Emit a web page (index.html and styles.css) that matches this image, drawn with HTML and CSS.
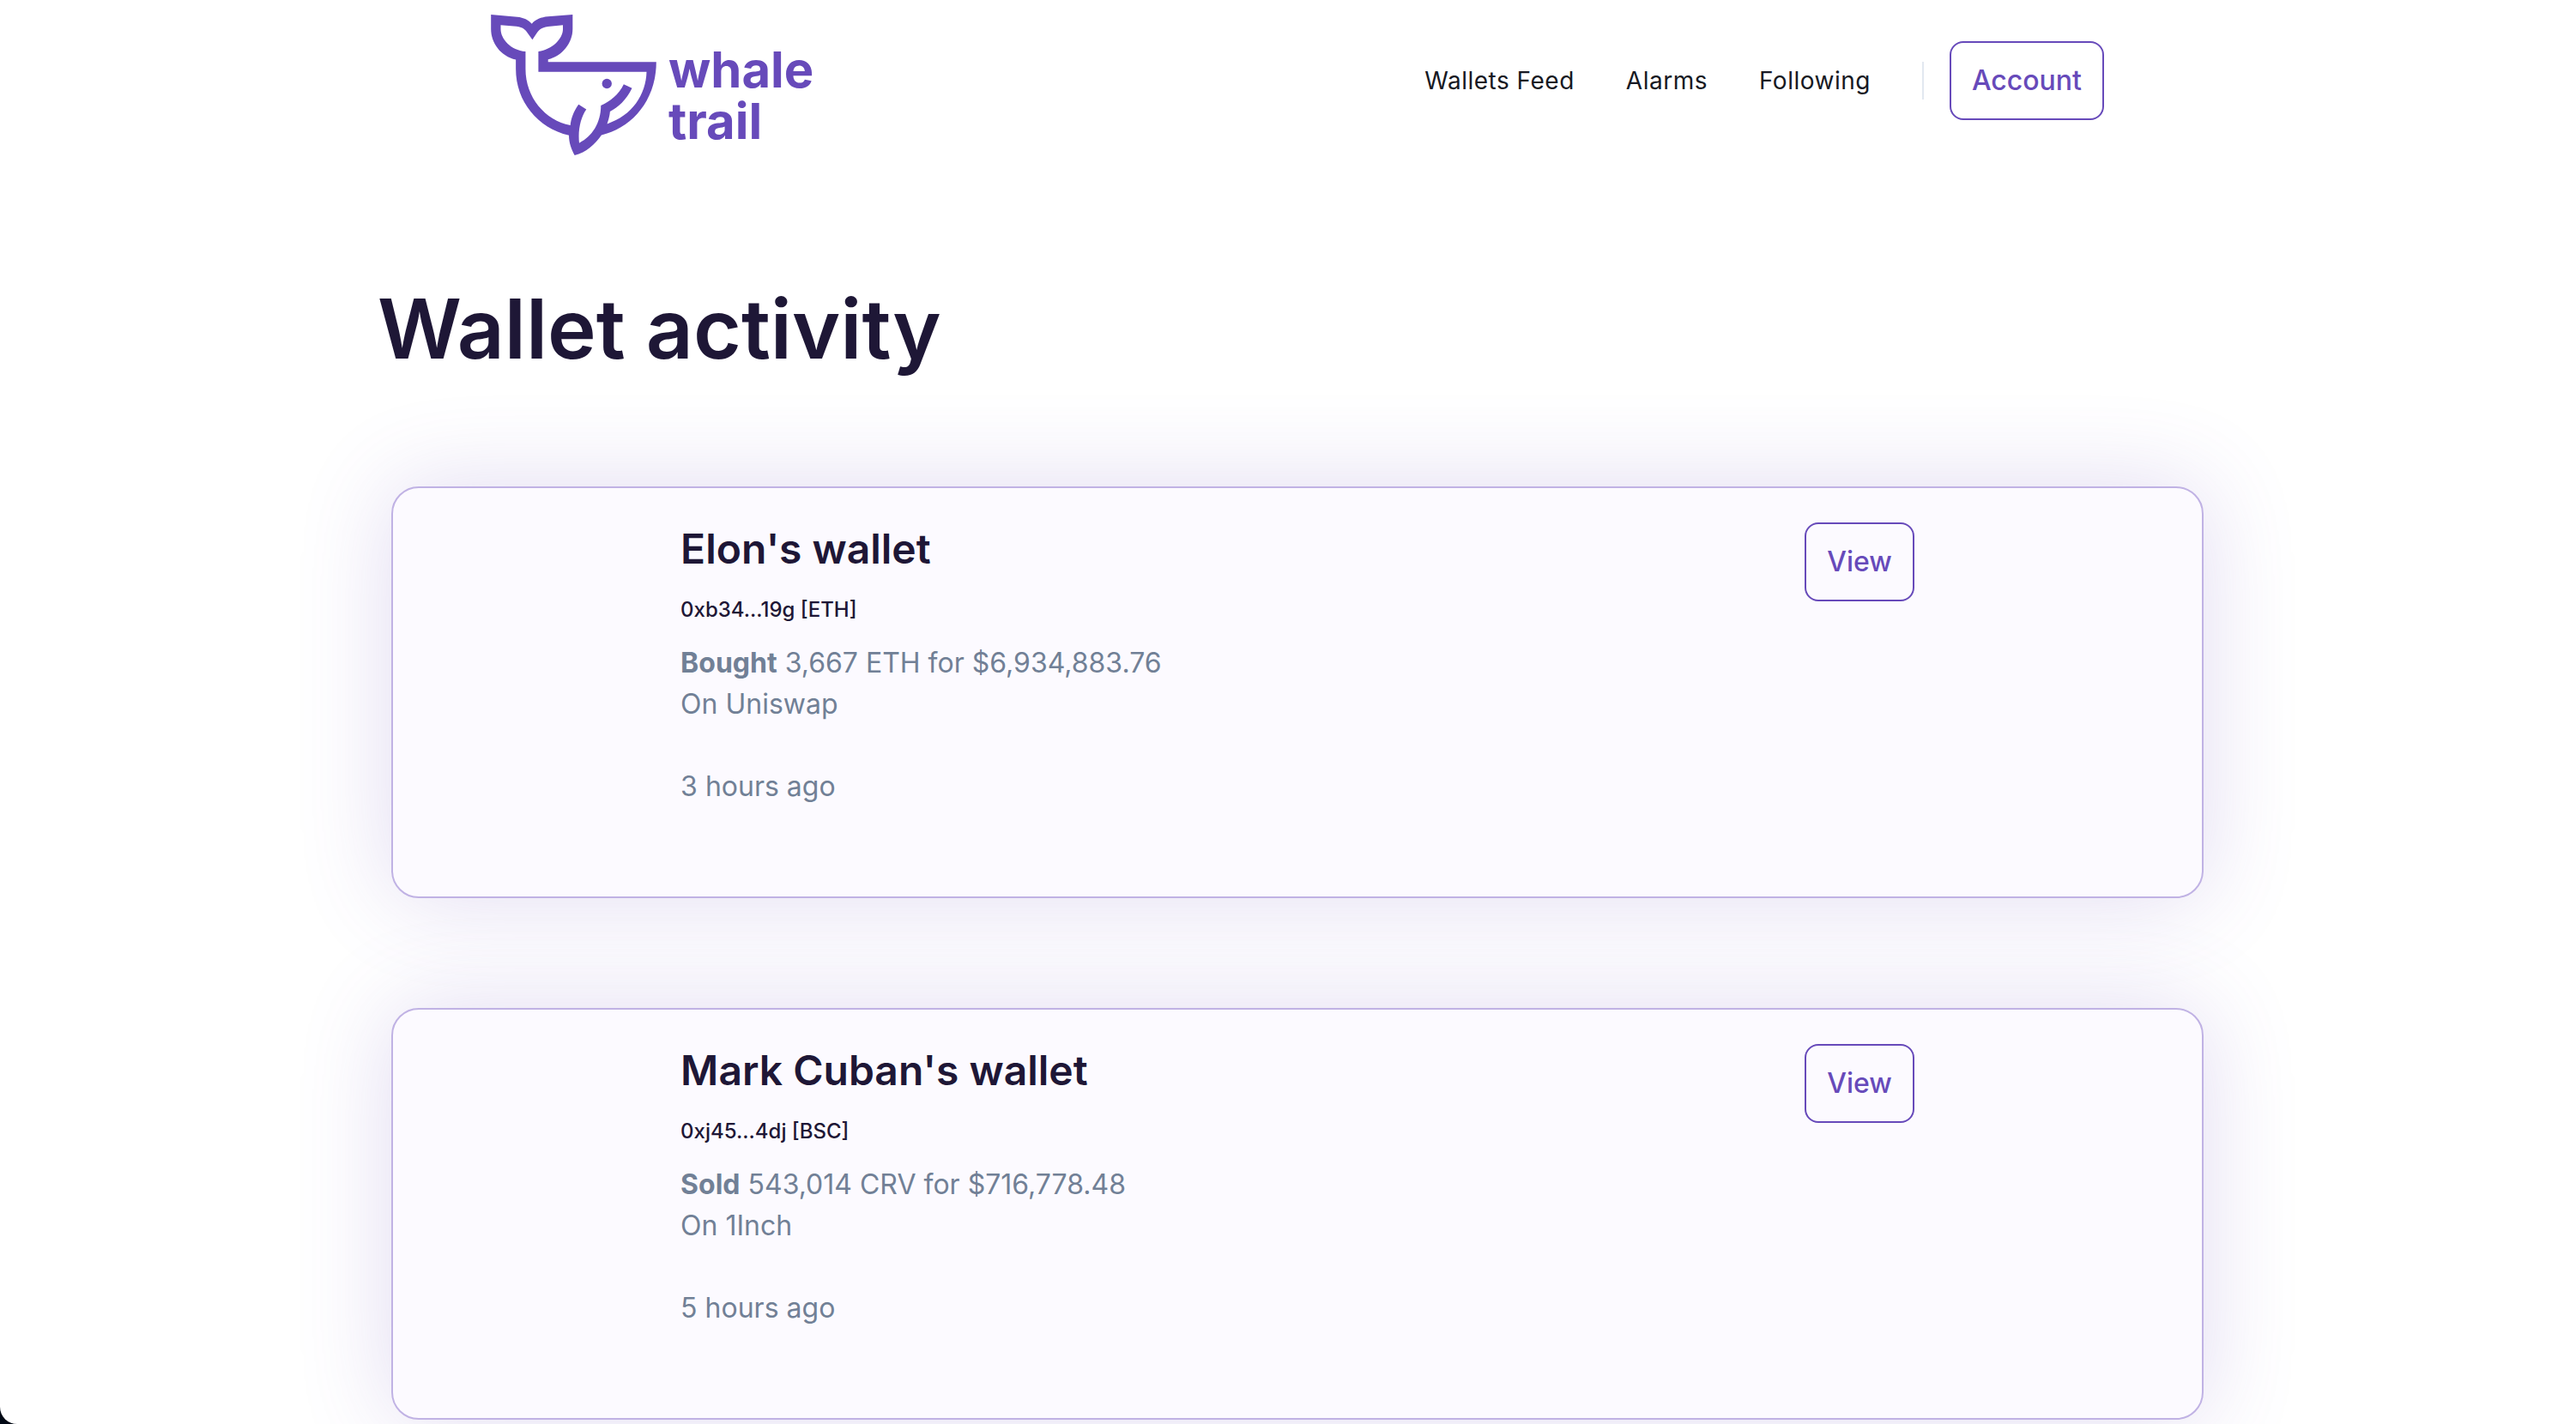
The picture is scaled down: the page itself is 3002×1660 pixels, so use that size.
FILE: index.html
```html
<!DOCTYPE html>
<html lang="en">
<head>
<meta charset="utf-8">
<title>Whale Trail</title>
<link rel="stylesheet" href="styles.css">
</head>
<body>
<div class="page">
  <header class="header">
    <a class="logo" href="#">
      <svg class="logo-mark" viewBox="36 50 579 493" aria-hidden="true">
        <path fill-rule="evenodd" d="M36 50L128 58C150 60 168 69 179 82C192 67 212 59 235 57L322 50V100C322 150 285 195 236 207V216H615C615 350 530 448 423 472C400 505 370 532 329 543C318 522 309 500 309 473C200 447 123 355 123 240V208C70 195 36 150 36 100ZM70 87L125 91C150 94 158 104 168 120L181 138L193 120C203 104 212 95 235 92L288 87V100C288 135 250 172 202 179V251H581C579 330 530 405 443 433C447 420 451 410 453 390C480 376 510 350 530 308L501 294C485 330 450 355 421 369C421 430 390 478 345 500C340 455 350 410 370 382L343 365C325 390 316 415 314 438C225 420 157 340 157 240V179C105 175 70 135 70 100Z"/>
        <circle cx="442" cy="292" r="17"/>
      </svg>
      <span class="logo-text">whale<br>trail</span>
    </a>
    <nav class="nav">
      <a class="nav-link" href="#">Wallets Feed</a>
      <a class="nav-link" href="#">Alarms</a>
      <a class="nav-link" href="#">Following</a>
      <div class="account"><button class="button" type="button">Account</button></div>
    </nav>
  </header>
  <main class="main">
    <h1 class="title">Wallet activity</h1>
    <div class="cards">
      <article class="card">
        <div class="card-body">
          <h2 class="wallet-name">Elon's wallet</h2>
          <p class="wallet-address">0xb34...19g [ETH]</p>
          <p class="trade"><strong>Bought</strong> 3,667 ETH for $6,934,883.76<br>On Uniswap</p>
          <p class="time">3 hours ago</p>
        </div>
        <button class="button" type="button">View</button>
      </article>
      <article class="card">
        <div class="card-body">
          <h2 class="wallet-name">Mark Cuban's wallet</h2>
          <p class="wallet-address">0xj45...4dj [BSC]</p>
          <p class="trade"><strong>Sold</strong> 543,014 CRV for $716,778.48<br>On 1Inch</p>
          <p class="time">5 hours ago</p>
        </div>
        <button class="button" type="button">View</button>
      </article>
    </div>
  </main>
</div>
</body>
</html>
```
FILE: styles.css
```css
* {
  box-sizing: border-box;
}

html {
  background: #000814;
}

body {
  margin: 0;
  font-family: Inter, "Liberation Sans", sans-serif;
  font-optical-sizing: none;
  color: #1e1736;
}

h1, h2, p {
  margin: 0;
}

.page {
  height: 100vh;
  overflow-y: auto;
  background: #fff;
  border-bottom-left-radius: 20px;
}

.header {
  display: flex;
  justify-content: space-between;
  align-items: center;
  height: 188px;
  padding: 0 550px 0 572px;
}

.logo {
  display: flex;
  gap: 14px;
  margin-top: 10px;
  color: #674aba;
  text-decoration: none;
}

.logo-mark {
  width: 193px;
  height: 164px;
  fill: currentColor;
}

.logo-text {
  padding-top: 34px;
  font-size: 58px;
  font-weight: 700;
  line-height: 60px;
}

.nav {
  display: flex;
  align-items: center;
  gap: 60px;
}

.nav-link {
  color: #171923;
  font-size: 28px;
  letter-spacing: 0.5px;
  text-decoration: none;
}

.account {
  display: flex;
  align-items: center;
  gap: 30px;
}

.account::before {
  content: "";
  width: 2px;
  height: 44px;
  background: #e2e8f0;
}

.button {
  height: 92px;
  padding: 0 24px 2px;
  border: 2px solid #674aba;
  border-radius: 16px;
  background: transparent;
  color: #674aba;
  font: 500 32px Inter, "Liberation Sans", sans-serif;
}

.main {
  padding: 137px 434px 0 456px;
}

.title {
  margin-left: -16px;
  font-size: 96px;
  font-weight: 600;
  line-height: 116px;
}

.cards {
  display: grid;
  gap: 128px;
  margin-top: 126px;
}

.card {
  display: flex;
  justify-content: space-around;
  align-items: flex-start;
  padding: 40px 0 104px;
  border: 2px solid #c0b2e4;
  border-radius: 32px;
  background: #fcfaff;
  box-shadow: 0 0 110px rgba(103, 74, 186, 0.2);
}

.card-body {
  width: 640px;
}

.wallet-name {
  font-size: 48px;
  font-weight: 600;
  line-height: 62px;
}

.wallet-address {
  margin-top: 24px;
  font-size: 24px;
  font-weight: 500;
  line-height: 32px;
}

.trade,
.time {
  color: #718096;
  font-size: 32px;
  line-height: 48px;
}

.trade {
  margin-top: 22px;
}

.time {
  margin-top: 48px;
}
```
